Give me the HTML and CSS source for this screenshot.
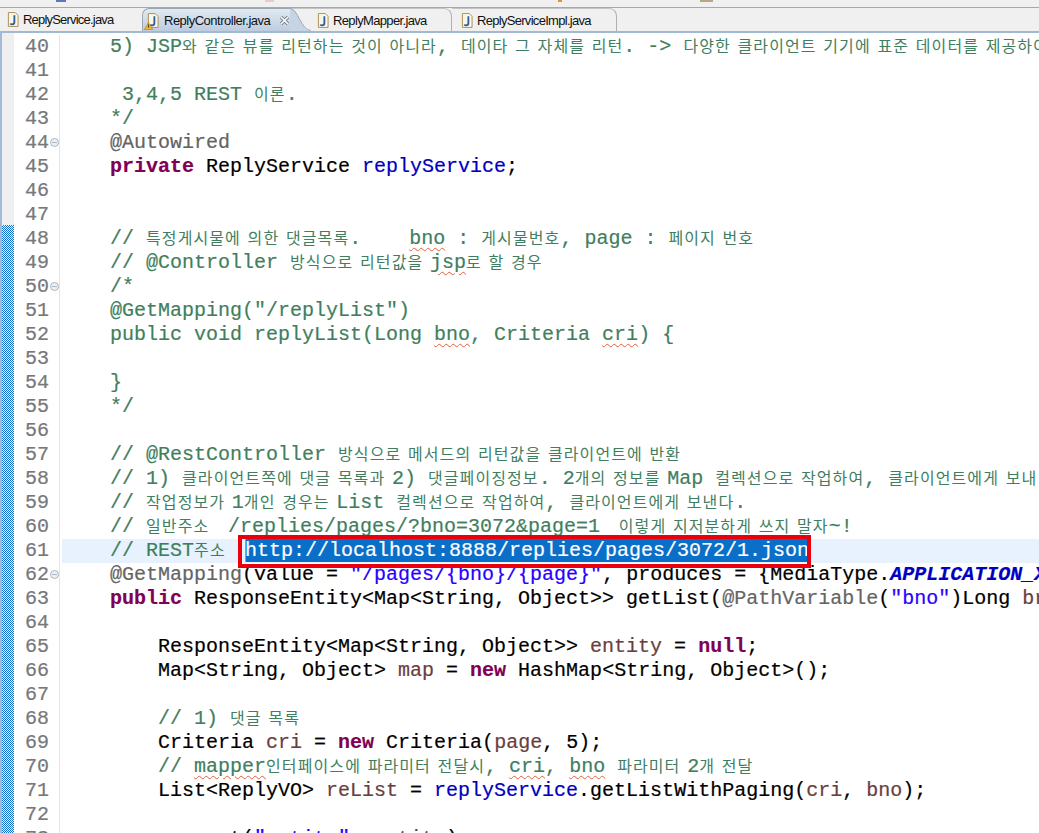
FILE: index.html
```html
<!DOCTYPE html>
<html lang="ko">
<head>
<meta charset="utf-8">
<title>ReplyController.java</title>
<link rel="stylesheet" href="styles.css">
</head>
<body>
<svg class="defs" width="0" height="0"><defs>
<symbol id="jfile" viewBox="0 0 13 16"><path d="M1.500.5h7.500l3 3v12h-10.500z" fill="#fbf6e8" stroke="#a98b4c"/><path d="M8 3.500v7.200c0 1.800-1.200 2.600-2.400 2.600-.9 0-1.600-.4-2-1" fill="none" stroke="#2f5f9f" stroke-width="2"/></symbol>
</defs></svg>
<div class="app">
  <div class="toolbar"><i class="bit bit-a"></i><i class="bit bit-b"></i><i class="bit bit-c"></i><i class="bit bit-d"></i></div>
  <div class="tabs">
    <div class="tab first"><svg class="jicon"><use href="#jfile"/></svg><span>ReplyService.java</span></div>
    <div class="tab active">
      <svg class="jicon"><use href="#jfile"/></svg>
      <svg class="warn" viewBox="0 0 9 8"><path d="M4.500.3 8.800 7.700H.2z" fill="#f0b030" stroke="#b57a10" stroke-width=".6"/><path d="M4.500 2.500v3" stroke="#5a3a00"/></svg>
      <span>ReplyController.java</span>
      <svg class="close" viewBox="0 0 11 11"><path d="M2 2l7 7M9 2l-7 7" stroke="#76828f" stroke-width="3.400"/><path d="M2 2l7 7M9 2l-7 7" stroke="#fff" stroke-width="1.600"/></svg>
      <svg class="wing" viewBox="0 0 21 23" preserveAspectRatio="none"><path d="M0 0C8 0 11 23 21 23H0z" fill="#c6d4e3"/><path d="M0 .5C8 .5 11 22.500 21 22.500" fill="none" stroke="#9aa7b5"/></svg>
    </div>
    <div class="tab mapper"><svg class="jicon"><use href="#jfile"/></svg><span>ReplyMapper.java</span></div>
    <div class="tab impl"><svg class="jicon"><use href="#jfile"/></svg><span>ReplyServiceImpl.java</span></div>
  </div>
  <div class="editor">
    <div class="band"></div>
    <div class="ruler"><div class="ruler-top"></div><div class="ruler-thumb"></div></div>
    <div class="lines">
      <div class="line"><b class="num">40</b><b class="fold"></b><div class="code c">    5) JSP<i class="k">와 같은 뷰를 리턴하는 것이 아니라</i>, <i class="k">데이타 그 자체를 리턴</i>. -&gt; <i class="k">다양한 클라이언트 기기에 표준 데이터를 제공하여</i></div></div>
      <div class="line"><b class="num">41</b><b class="fold"></b><div class="code"></div></div>
      <div class="line"><b class="num">42</b><b class="fold"></b><div class="code c">     3,4,5 REST <i class="k">이론</i>.</div></div>
      <div class="line"><b class="num">43</b><b class="fold"></b><div class="code c">    */</div></div>
      <div class="line"><b class="num">44</b><b class="fold"><i class="minus"></i></b><div class="code">    <span class="a">@Autowired</span></div></div>
      <div class="line"><b class="num">45</b><b class="fold"></b><div class="code">    <span class="w">private</span> ReplyService <span class="f">replyService</span>;</div></div>
      <div class="line"><b class="num">46</b><b class="fold"></b><div class="code"></div></div>
      <div class="line"><b class="num">47</b><b class="fold"></b><div class="code"></div></div>
      <div class="line"><b class="num">48</b><b class="fold"></b><div class="code c">    // <i class="k">특정게시물에 의한 댓글목록</i>.    <span class="sq">bno</span> : <i class="k">게시물번호</i>, page : <i class="k">페이지 번호</i></div></div>
      <div class="line"><b class="num">49</b><b class="fold"></b><div class="code c">    // @Controller <i class="k">방식으로 리턴값을 </i><span class="sq">jsp</span><i class="k">로 할 경우</i></div></div>
      <div class="line"><b class="num">50</b><b class="fold"><i class="minus"></i></b><div class="code c">    /*</div></div>
      <div class="line"><b class="num">51</b><b class="fold"></b><div class="code c">    @GetMapping("/replyList")</div></div>
      <div class="line"><b class="num">52</b><b class="fold"></b><div class="code c">    public void replyList(Long <span class="sq">bno</span>, Criteria <span class="sq">cri</span>) {</div></div>
      <div class="line"><b class="num">53</b><b class="fold"></b><div class="code c"></div></div>
      <div class="line"><b class="num">54</b><b class="fold"></b><div class="code c">    }</div></div>
      <div class="line"><b class="num">55</b><b class="fold"></b><div class="code c">    */</div></div>
      <div class="line"><b class="num">56</b><b class="fold"></b><div class="code"></div></div>
      <div class="line"><b class="num">57</b><b class="fold"></b><div class="code c">    // @RestController <i class="k">방식으로 메서드의 리턴값을 클라이언트에 반환</i></div></div>
      <div class="line"><b class="num">58</b><b class="fold"></b><div class="code c">    // 1) <i class="k">클라이언트쪽에 댓글 목록과 </i>2) <i class="k">댓글페이징정보</i>. 2<i class="k">개의 정보를 </i>Map <i class="k">컬렉션으로 작업하여</i>, <i class="k">클라이언트에게 보내</i></div></div>
      <div class="line"><b class="num">59</b><b class="fold"></b><div class="code c">    // <i class="k">작업정보가 </i>1<i class="k">개인 경우는 </i>List <i class="k">컬렉션으로 작업하여</i>, <i class="k">클라이언트에게 보낸다</i>.</div></div>
      <div class="line"><b class="num">60</b><b class="fold"></b><div class="code c">    // <i class="k">일반주소 </i> /replies/pages/?bno=3072&amp;page=1 <i class="k"> 이렇게 지저분하게 쓰지 말자</i>~!</div></div>
      <div class="line"><b class="num">61</b><b class="fold"></b><div class="code c current">    // REST<i class="k url-lead">주소 </i> <span class="url">http://localhost:8888/replies/pages/3072/1.json</span></div></div>
      <div class="line"><b class="num">62</b><b class="fold"><i class="minus"></i></b><div class="code">    <span class="a">@GetMapping</span>(value = <span class="s">"/pages/{bno}/{page}"</span>, produces = {MediaType.<em class="f">APPLICATION_X</em></div></div>
      <div class="line"><b class="num">63</b><b class="fold"></b><div class="code">    <span class="w">public</span> ResponseEntity&lt;Map&lt;String, Object&gt;&gt; getList(<span class="a">@PathVariable</span>(<span class="s">"bno"</span>)Long <span class="v">br</span></div></div>
      <div class="line"><b class="num">64</b><b class="fold"></b><div class="code"></div></div>
      <div class="line"><b class="num">65</b><b class="fold"></b><div class="code">        ResponseEntity&lt;Map&lt;String, Object&gt;&gt; <span class="v">entity</span> = <span class="w">null</span>;</div></div>
      <div class="line"><b class="num">66</b><b class="fold"></b><div class="code">        Map&lt;String, Object&gt; <span class="v">map</span> = <span class="w">new</span> HashMap&lt;String, Object&gt;();</div></div>
      <div class="line"><b class="num">67</b><b class="fold"></b><div class="code"></div></div>
      <div class="line"><b class="num">68</b><b class="fold"></b><div class="code c">        // 1) <i class="k">댓글 목록</i></div></div>
      <div class="line"><b class="num">69</b><b class="fold"></b><div class="code">        Criteria <span class="v">cri</span> = <span class="w">new</span> Criteria(<span class="v">page</span>, 5);</div></div>
      <div class="line"><b class="num">70</b><b class="fold"></b><div class="code c">        // <span class="sq">mapper</span><i class="k">인터페이스에 파라미터 전달시</i>, <span class="sq">cri</span>, <span class="sq">bno</span> <i class="k">파라미터 </i>2<i class="k">개 전달</i></div></div>
      <div class="line"><b class="num">71</b><b class="fold"></b><div class="code">        List&lt;ReplyVO&gt; <span class="v">reList</span> = <span class="f">replyService</span>.getListWithPaging(<span class="v">cri</span>, <span class="v">bno</span>);</div></div>
      <div class="line"><b class="num">72</b><b class="fold"></b><div class="code"></div></div>
      <div class="line"><b class="num">73</b><b class="fold"></b><div class="code">        <span class="v">map</span>.put(<span class="s">"entity"</span>, <span class="v">entity</span>);</div></div>
    </div>
  </div>
</div>
</body>
</html>
```
FILE: styles.css
```css
html, body { margin: 0; padding: 0; height: 100%; overflow: hidden; background: #fff; }
.defs { position: absolute; }
.app { width: 1039px; height: 833px; overflow: hidden; display: flex; flex-direction: column; background: #fff; }

.toolbar { height: 7px; flex: none; display: flex; background: #f0f0f0; border-bottom: 1px solid #a8a8a8; }
.bit { display: block; height: 2px; }
.bit-a { width: 10px; margin-left: 56px; background: #5a78b8; }
.bit-b { width: 9px; margin-left: 199px; background: #f0c8c8; }
.bit-c { width: 4px; margin-left: 284px; background: #d89a2a; }
.bit-d { width: 13px; margin-left: 138px; background: #b8a888; }

.tabs { height: 23px; flex: none; display: flex; background: #f0f0f0; font: 13px/23px "Liberation Sans", sans-serif; color: #111; }
.tab { display: flex; align-items: center; position: relative; box-sizing: border-box; height: 23px; flex: none; }
.tab .jicon { width: 12px; height: 15px; margin-right: 4px; flex: none; }
.first { width: 142px; padding-left: 7px; letter-spacing: -.8px; }
.active { width: 148px; padding-left: 4px; letter-spacing: -.5px; border-left: 1px solid #9aa7b5; border-top: 1px solid #9aa7b5; border-top-left-radius: 7px; background: linear-gradient(#e2e9f1, #bccde0); }
.active .jicon { margin-right: 5px; }
.warn { position: absolute; left: 1px; top: 13px; width: 9px; height: 8px; }
.close { width: 11px; height: 11px; margin-left: 9px; flex: none; }
.wing { position: absolute; left: 147px; top: -1px; width: 21px; height: 23px; z-index: 1; }
.mapper { width: 162px; padding-left: 27px; letter-spacing: -.65px; border-right: 1px solid #b0b0b0; border-top: 1px solid #c4c4c4; border-top-right-radius: 8px; }
.impl { width: 165px; padding-left: 9px; letter-spacing: -.7px; border-right: 1px solid #b0b0b0; border-top: 1px solid #c4c4c4; border-top-right-radius: 8px; }

.editor { flex: 1; display: flex; min-height: 0; border-top: 2px solid #a2b9d4; }
.band { width: 2px; flex: none; background: #a2b9d9; }
.ruler { width: 12px; flex: none; display: flex; flex-direction: column; }
.ruler-top { height: 192px; flex: none; background: #efefef; }
.ruler-thumb { flex: 1; background-color: #fff; background-image: conic-gradient(#0a6fd0 25%, #fff 0 50%, #0a6fd0 0 75%, #fff 0); background-size: 2px 2px; }

.lines { flex: 1; min-width: 0; overflow: hidden; padding-top: 2px; font: 20px/24px "Liberation Mono", monospace; color: #000; -webkit-text-stroke: .2px; }
.line { display: flex; height: 24px; }
.num { width: 35px; flex: none; text-align: right; color: #787878; font-weight: normal; }
.fold { width: 11px; flex: none; box-sizing: border-box; border-right: 1px solid #e6e6e6; padding-top: 7px; }
.minus { display: block; width: 9px; height: 9px; box-sizing: border-box; border: 1px solid #a9b4c0; border-radius: 50%; background: linear-gradient(#a9b4c0, #a9b4c0) center/5px 1px no-repeat #eef1f4; margin-left: 1px; }
.code { flex: 1; min-width: 0; white-space: pre; margin-left: 2px; }
.current { background: #e8f2fe; }
.c { color: #3f7f5f; }
.a { color: #646464; }
.w { color: #7f0055; font-weight: bold; }
.f { color: #0000c0; }
em.f { font-style: italic; font-weight: bold; }
.s { color: #2a00ff; }
.v { color: #6a3e3e; }
.k { font: normal 16px/16px "Noto Sans CJK KR", sans-serif; letter-spacing: 1.1px; word-spacing: 1.100px; -webkit-text-stroke: 0; }
.url-lead { letter-spacing: 1.280px; }
.sq { text-decoration: underline wavy #e2603a 1px; text-underline-offset: 3px; }
.url { position: relative; display: inline-block; line-height: 23px; color: #fff; background: #0a6fc9; box-shadow: inset 1px 0 #f08a24; }
.url::after { content: ""; position: absolute; left: -7px; right: -2px; top: -4px; bottom: -6px; border: 4px solid #e8000d; }
```
